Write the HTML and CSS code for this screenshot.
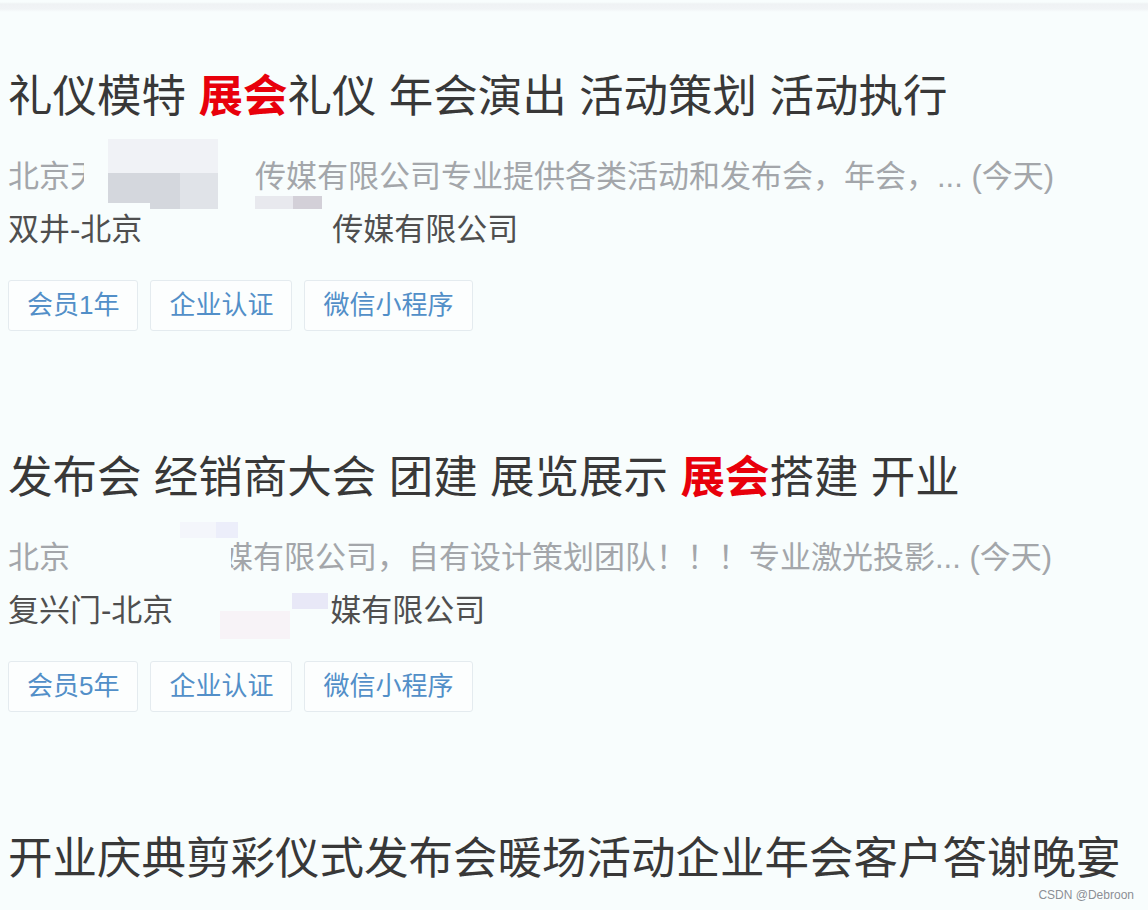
FILE: index.html
```html
<html lang="zh-CN">
<head>
    <meta charset="UTF-8">
    <meta name="viewport" content="width=device-width, initial-scale=1.0">
    <title>活动策划列表</title>
    <link rel="stylesheet" href="styles.css">
</head>
<body>
    <div class="page">
        <div class="topbar"></div>
        <div class="list">
            <div class="item">
                <div class="title">礼仪模特 <em>展会</em>礼仪 年会演出 活动策划 活动执行</div>
                <div class="row desc">
                    <span class="clip clip-a">北京天</span>
                    <span class="text t-a">传媒有限公司专业提供各类活动和发布会，年会，... (今天)</span>
                    <i class="blur" style="left:100px;top:-11px;width:110px;height:34px;background:#f0f2f6"></i>
                    <i class="blur" style="left:100px;top:23px;width:72px;height:30px;background:#d4d7dd"></i>
                    <i class="blur" style="left:142px;top:53px;width:30px;height:6px;background:#d4d7dd"></i>
                    <i class="blur" style="left:172px;top:23px;width:38px;height:36px;background:#e0e3e8"></i>
                </div>
                <div class="row company">
                    <span class="text">双井-北京</span>
                    <span class="text t-c1">传媒有限公司</span>
                    <i class="blur" style="left:247px;top:-7px;width:38px;height:13px;background:#e8e9ee"></i>
                    <i class="blur" style="left:285px;top:-7px;width:29px;height:13px;background:#d3d0d8"></i>
                </div>
                <div class="tags">
                    <span class="tag">会员1年</span>
                    <span class="tag">企业认证</span>
                    <span class="tag">微信小程序</span>
                </div>
            </div>
            <div class="item">
                <div class="title">发布会 经销商大会 团建 展览展示 <em>展会</em>搭建 开业</div>
                <div class="row desc">
                    <span class="text">北京</span>
                    <span class="clip clip-b"><span class="clip-end">媒</span></span>
                    <span class="text">有限公司，自有设计策划团队！！！专业激光投影... (今天)</span>
                    <i class="blur" style="left:172px;top:-9px;width:36px;height:16px;background:#f4f6fb"></i>
                    <i class="blur" style="left:208px;top:-9px;width:22px;height:16px;background:#eceefa"></i>
                </div>
                <div class="row company">
                    <span class="text">复兴门-北京</span>
                    <span class="text t-c2">媒有限公司</span>
                    <i class="blur" style="left:284px;top:9px;width:36px;height:16px;background:#e8e8f7"></i>
                    <i class="blur" style="left:212px;top:27px;width:70px;height:28px;background:#f7f3f7"></i>
                </div>
                <div class="tags">
                    <span class="tag">会员5年</span>
                    <span class="tag">企业认证</span>
                    <span class="tag">微信小程序</span>
                </div>
            </div>
            <div class="item">
                <div class="title">开业庆典剪彩仪式发布会暖场活动企业年会客户答谢晚宴</div>
            </div>
        </div>
        <div class="watermark">CSDN @Debroon</div>
    </div>
</body>
</html>
```

FILE: styles.css
```css
body {
    margin: 0;
    background-color: #f8fdfd;
    font-family: "Liberation Sans", "Noto Sans CJK SC", sans-serif;
}
.page {
    position: relative;
    height: 910px;
    overflow: hidden;
}
.topbar {
    height: 12px;
    background: linear-gradient(#f8fdfd 0, #f8fdfd 2px, #eff2f4 4px, #f1f4f6 9px, #f8fdfd 12px);
}
.list {
    padding: 55px 0 0 8px;
}
.item {
    margin-bottom: 117px;
}
.title {
    font-size: 44.5px;
    line-height: 60px;
    color: #383838;
    white-space: nowrap;
}
.title em {
    font-style: normal;
    font-weight: bold;
    color: #e8000b;
}
.row {
    position: relative;
    display: flex;
    font-size: 31px;
    line-height: 53px;
    white-space: nowrap;
}
.desc {
    margin-top: 23px;
    color: #a3a6aa;
}
.company {
    color: #4f4f4f;
}
.clip {
    overflow: hidden;
}
.clip-a {
    width: 76px;
}
.clip-b {
    display: flex;
    justify-content: flex-end;
    width: 22px;
    margin-left: 161px;
}
.clip-end {
    flex-shrink: 0;
}
.t-a {
    margin-left: 171px;
}
.t-c1 {
    margin-left: 190px;
}
.t-c2 {
    margin-left: 157px;
}
.blur {
    position: absolute;
}
.tags {
    display: flex;
    gap: 12px;
    margin-top: 24px;
}
.tag {
    height: 49px;
    line-height: 49px;
    padding: 0 18px;
    font-size: 26px;
    color: #528fc8;
    background-color: #fcfefe;
    border: 1px solid #e4ebef;
    border-radius: 3px;
}
.watermark {
    position: absolute;
    right: 14px;
    bottom: 8px;
    font-size: 12px;
    color: #8a8f95;
    text-shadow: 0 0 2px #fff;
}
```
